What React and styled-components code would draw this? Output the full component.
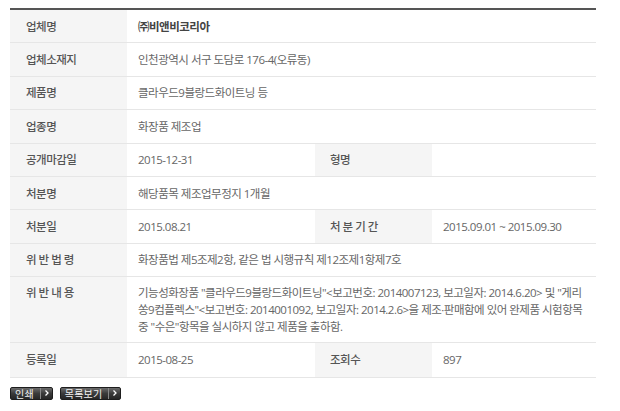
import React from 'react';
import styled, {createGlobalStyle} from 'styled-components';

const GlobalStyle = createGlobalStyle`
    html, body {
        margin: 0;
        padding: 0;
        background: #fff;
    }
    body {
        font-family: "Open Sans", "Noto Sans CJK KR", sans-serif;
        font-size: 11.5px;
        color: #666;
    }
`;

const Page = styled.div`
    padding: 8px 24px 0 10px;
    width: 586px;
`;

const Grid = styled.div`
    display: grid;
    grid-template-columns: 117px 188px 117px 164px;
    border-top: 2px solid #555;
`;

const Cell = styled.div`
    box-sizing: border-box;
    min-height: ${p => p.h || 33.4}px;
    border-bottom: 1px solid #e6e6e6;
    display: flex;
    align-items: ${p => p.top ? 'flex-start' : 'center'};
    padding: ${p => p.top ? '7px' : '0'} 0 0 0;
    line-height: 17px;
    letter-spacing: -0.5px;
`;

const Label = styled(Cell)`
    background: #f5f5f5;
    padding-left: ${p => p.second ? 15 : 16}px;
    color: #555;
    font-weight: 500;
`;

const Value = styled(Cell)`
    grid-column: ${p => p.wide ? 'span 3' : 'auto'};
    padding-left: 11px;
    padding-right: 8px;
    color: #666;
    font-weight: ${p => p.strong ? 700 : 400};
    ${p => p.strong && 'color: #444;'}
`;

const Lines = styled.div`
    white-space: nowrap;
`;

const Buttons = styled.div`
    display: flex;
    gap: 7px;
    margin-top: 9px;
`;

const Button = styled.button`
    display: inline-flex;
    align-items: center;
    height: 13px;
    box-sizing: border-box;
    padding: 0 3px 0 4px;
    border: 1px solid #1e1e1e;
    border-radius: 2px;
    background: linear-gradient(#6b6b6b, #3a3a3a 50%, #262626);
    color: #f2f2f2;
    font-family: "Noto Sans CJK KR", sans-serif;
    font-size: 10px;
    line-height: 11px;
    cursor: pointer;
`;

const ButtonText = styled.span`
    padding-right: 6px;
    letter-spacing: 0.2px;
`;

const Divider = styled.span`
    display: flex;
    align-items: center;
    height: 11px;
    border-left: 1px solid #888;
    padding-left: 4px;
`;

const Chevron = () => (
    <svg width="4" height="6" viewBox="0 0 4 6">
        <path d="M0.5 0.5 L3 3 L0.5 5.5" stroke="#fff" strokeWidth="1.3" fill="none" />
    </svg>
);

const ActionButton = ({children}) => (
    <Button>
        <ButtonText>{children}</ButtonText>
        <Divider><Chevron /></Divider>
    </Button>
);

export default function App(){
    return (
        <Page>
            <GlobalStyle />
            <Grid>
                <Label>업체명</Label>
                <Value wide strong>㈜비앤비코리아</Value>

                <Label>업체소재지</Label>
                <Value wide>인천광역시 서구 도담로 176-4(오류동)</Value>

                <Label>제품명</Label>
                <Value wide>클라우드9블랑드화이트닝 등</Value>

                <Label>업종명</Label>
                <Value wide>화장품 제조업</Value>

                <Label>공개마감일</Label>
                <Value>2015-12-31</Value>
                <Label second>형명</Label>
                <Value></Value>

                <Label>처분명</Label>
                <Value wide>해당품목 제조업무정지 1개월</Value>

                <Label>처분일</Label>
                <Value>2015.08.21</Value>
                <Label second>처 분 기 간</Label>
                <Value>2015.09.01 ~ 2015.09.30</Value>

                <Label>위 반 법 령</Label>
                <Value wide>화장품법 제5조제2항, 같은 법 시행규칙 제12조제1항제7호</Value>

                <Label top h={65.5}>위 반 내 용</Label>
                <Value wide top h={65.5}>
                    <Lines>
                        기능성화장품 "클라우드9블랑드화이트닝"&lt;보고번호: 2014007123, 보고일자: 2014.6.20&gt; 및 "게리<br />
                        쏭9컴플렉스"&lt;보고번호: 2014001092, 보고일자: 2014.2.6&gt;을 제조·판매함에 있어 완제품 시험항목<br />
                        중 "수은"항목을 실시하지 않고 제품을 출하함.
                    </Lines>
                </Value>

                <Label h={35}>등록일</Label>
                <Value h={35}>2015-08-25</Value>
                <Label second h={35}>조회수</Label>
                <Value h={35}>897</Value>
            </Grid>
            <Buttons>
                <ActionButton>인쇄</ActionButton>
                <ActionButton>목록보기</ActionButton>
            </Buttons>
        </Page>
    );
}
